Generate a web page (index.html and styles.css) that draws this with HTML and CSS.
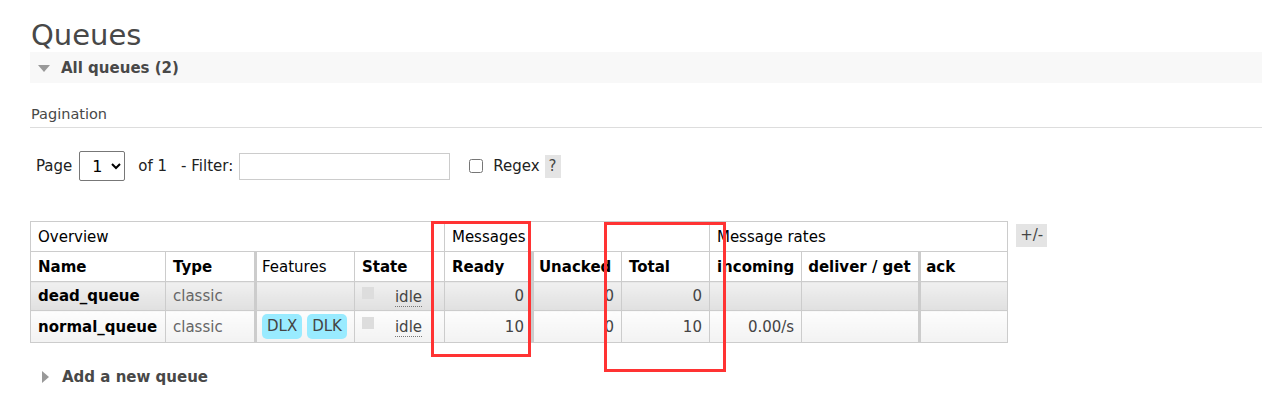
FILE: index.html
```html
<!DOCTYPE html>
<html lang="en">
<head>
  <meta charset="UTF-8">
  <title>Queues</title>
  <link rel="stylesheet" href="styles.css">
</head>
<body>
  <h1>Queues</h1>

  <div class="section">
    <div class="section-title"><span class="arrow-down"></span>All queues (2)</div>

    <div class="pagination">
      <h3>Pagination</h3>
      <div class="filter-row">
        <label>Page</label>
        <select class="page-select"><option>1</option></select>
        <span class="of">of 1</span>
        <label>- Filter:</label>
        <input type="text" class="filter-input">
        <input type="checkbox" class="regex-check">
        <label>Regex</label>
        <span class="help">?</span>
      </div>
    </div>

    <div class="table-wrap">
      <table class="list">
        <thead>
          <tr class="group-row">
            <th colspan="4">Overview</th>
            <th colspan="3">Messages</th>
            <th colspan="3">Message rates</th>
          </tr>
          <tr>
            <th class="w-name">Name</th>
            <th class="w-type">Type</th>
            <th class="w-feat light sep">Features</th>
            <th class="w-state">State</th>
            <th class="w-ready">Ready</th>
            <th class="w-unacked sep">Unacked</th>
            <th class="w-total">Total</th>
            <th class="w-inc">incoming</th>
            <th class="w-del">deliver / get</th>
            <th class="w-ack sep">ack</th>
          </tr>
        </thead>
        <tbody>
          <tr class="alt1">
            <td><b>dead_queue</b></td>
            <td class="muted">classic</td>
            <td class="sep"></td>
            <td><span class="state-box"></span><span class="idle">idle</span></td>
            <td class="r">0</td>
            <td class="r sep">0</td>
            <td class="r">0</td>
            <td class="r"></td>
            <td></td>
            <td class="sep"></td>
          </tr>
          <tr class="alt2">
            <td><b>normal_queue</b></td>
            <td class="muted">classic</td>
            <td class="sep"><span class="badge">DLX</span><span class="badge">DLK</span></td>
            <td><span class="state-box"></span><span class="idle">idle</span></td>
            <td class="r">10</td>
            <td class="r sep">0</td>
            <td class="r">10</td>
            <td class="r">0.00/s</td>
            <td></td>
            <td class="sep"></td>
          </tr>
        </tbody>
      </table>
      <span class="plus-minus">+/-</span>

      <div class="mark mark-ready"></div>
      <div class="mark mark-total"></div>
    </div>
  </div>

  <div class="section-title closed"><span class="arrow-right"></span>Add a new queue</div>
</body>
</html>
```

FILE: styles.css
```css
body {
  margin: 0;
  padding: 0 0 0 30px;
  font-family: 'DejaVu Sans', Verdana, sans-serif;
  font-size: 15px;
  color: #484848;
  background: #fff;
}
h1 {
  margin: 0;
  padding: 18px 0 0 1px;
  font-size: 29px;
  font-weight: normal;
  line-height: 34px;
  color: #484848;
}
.section-title {
  display: flex;
  align-items: center;
  height: 31px;
  background: #f8f8f8;
  font-weight: bold;
  font-size: 15px;
  color: #484848;
}
.section-title.closed {
  background: none;
  margin-top: 18px;
}
.arrow-down {
  width: 0;
  height: 0;
  margin: 1px 11px 0 8px;
  border-left: 6px solid transparent;
  border-right: 6px solid transparent;
  border-top: 7px solid #999;
}
.arrow-right {
  width: 0;
  height: 0;
  margin: 0 13px 0 12px;
  border-top: 6px solid transparent;
  border-bottom: 6px solid transparent;
  border-left: 7px solid #999;
}
.pagination h3 {
  margin: 22px 0 0;
  padding: 0 0 4px 1px;
  font-size: 14.5px;
  font-weight: normal;
  line-height: 18px;
  border-bottom: 1px solid #ddd;
}
.filter-row {
  display: flex;
  align-items: center;
  margin-top: 23px;
  padding-left: 6px;
  font-size: 15px;
  color: #222;
}
.page-select {
  margin-left: 7px;
  width: 46px;
  height: 30px;
  font: 16px 'DejaVu Sans', sans-serif;
  border: 1px solid #777;
  border-radius: 2px;
  background: #fff;
  padding: 0 0 0 8px;
}
.of {
  margin: 0 14px 0 13px;
}
.filter-input {
  margin: 0 19px 0 6px;
  width: 211px;
  height: 27px;
  box-sizing: border-box;
  border: 1px solid #ccc;
}
.regex-check {
  margin: 0 10px 0 0;
  width: 14px;
  height: 14px;
}
.help {
  margin-left: 5px;
  padding: 2px 4px 3px;
  background: #e4e4e4;
  color: #444;
}
.table-wrap {
  position: relative;
  display: flex;
  align-items: flex-start;
  margin-top: 40px;
}
table.list {
  border-collapse: collapse;
  font-size: 15px;
}
table.list th,
table.list td {
  border: 1px solid #ccc;
  padding: 0 7px;
  text-align: left;
  white-space: nowrap;
}
table.list th {
  height: 29px;
  color: #000;
}
.group-row th {
  font-weight: normal;
  color: #222;
}
th.light {
  font-weight: normal;
}
table.list td {
  height: 28px;
  color: #444;
}
table.list tr.alt2 td {
  height: 31px;
}
table.list .sep {
  border-left: 3px solid #ccc;
  padding-left: 5px;
}
.w-name { width: 120px; }
.w-type { width: 74px; }
table.list .w-feat { width: 84px; padding-right: 6px; }
.w-state { width: 75px; }
.w-ready { width: 72px; }
.w-unacked { width: 75px; }
.w-total { width: 73px; }
.w-inc { width: 77px; }
table.list .w-del { width: 104px; padding: 0 6px; }
.w-ack { width: 74px; }
tr.alt1 td {
  background: linear-gradient(#f0f0f0, #e0e0e0);
}
tr.alt2 td {
  background: linear-gradient(#fdfdfd, #f2f2f2);
}
table.list td b {
  color: #000;
}
table.list td.muted {
  color: #666;
}
table.list td.r {
  text-align: right;
}
.state-box {
  display: inline-block;
  width: 12px;
  height: 12px;
  margin-right: 21px;
  vertical-align: 3px;
  background: #ddd;
}
.idle {
  border-bottom: 1px dotted #777;
  color: #444;
}
.badge {
  display: inline-block;
  padding: 3px 5px 4px;
  border-radius: 5px;
  background: #99ebff;
  color: #444;
}
.badge + .badge {
  margin-left: 5px;
}
.plus-minus {
  margin: 3px 0 0 8px;
  padding: 2px 4px 3px;
  background: #e4e4e4;
  font-size: 15px;
  color: #444;
}
.mark {
  position: absolute;
  border: 3px solid #f33;
  box-sizing: border-box;
}
.mark-ready {
  left: 401px;
  top: 0;
  width: 100px;
  height: 136px;
}
.mark-total {
  left: 574px;
  top: 1px;
  width: 122px;
  height: 150px;
}
```
